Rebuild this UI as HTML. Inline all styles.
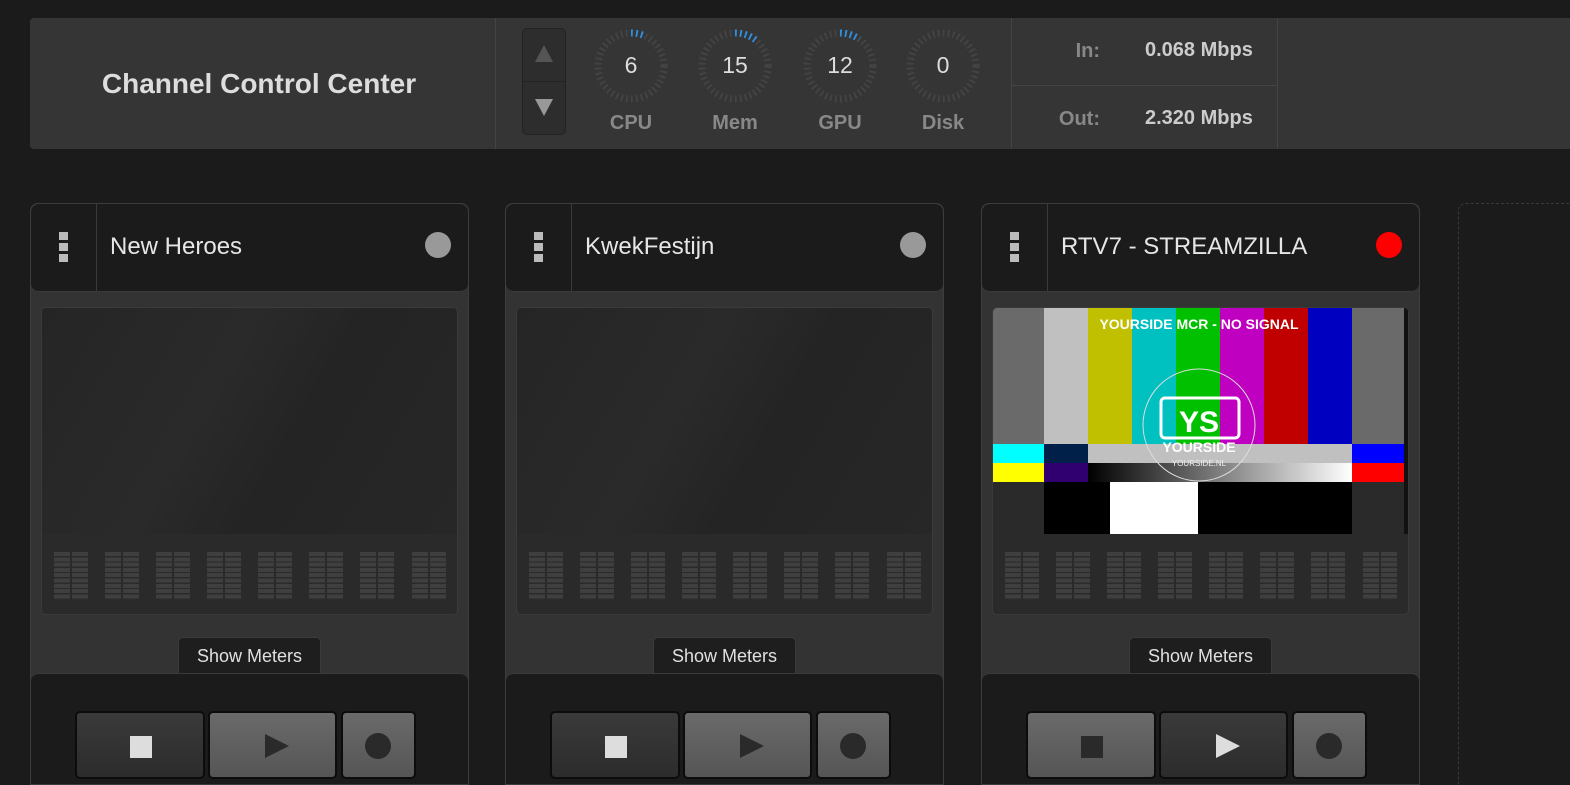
<!DOCTYPE html>
<html style="width:1570px;height:785px;overflow:hidden"><head><style>
*{box-sizing:border-box;margin:0;padding:0}
body{width:1570px;height:785px;background:#1b1b1b;font-family:"Liberation Sans",sans-serif;position:relative;overflow:hidden;color:#ddd}
.abs{position:absolute}
.top{left:30px;top:18px;width:1560px;height:131px;background:#353535;border-radius:4px}
.vl{position:absolute;top:0;height:131px;width:1px;background:#444}
.title{left:0;width:458px;top:50px;text-align:center;font-weight:bold;font-size:28px;color:#ddd}
.arr{left:492px;top:10px;width:44px;height:107px;border:1px solid #222;border-radius:5px;background:#2d2d2d}
.gl{position:absolute;width:80px;text-align:center;font-weight:bold;font-size:20px;color:#888;top:94px}
.gv{position:absolute;width:80px;text-align:center;font-size:23px;color:#ddd;top:34px}
.net{position:absolute;font-weight:bold;font-size:20px}
.card{position:absolute;top:203px;width:439px;height:582px;background:#333;border:1px solid #3d3d3d;border-radius:8px 8px 0 0;overflow:hidden}
.hdr{position:absolute;left:0;top:0;width:100%;height:88px;background:#1b1b1b;border-bottom:1px solid #3a3a3a;border-radius:8px}
.dots{position:absolute;left:28px;top:28px;width:9px}
.dots i{display:block;width:9px;height:8px;background:#bbb;margin-bottom:3px}
.hsep{position:absolute;left:65px;top:0;width:1px;height:88px;background:#3a3a3a}
.name{position:absolute;left:79px;top:29px;font-size:24px;color:#e6e6e6}
.led{position:absolute;right:17px;top:28px;width:26px;height:26px;border-radius:50%;background:#999}
.prev{position:absolute;left:10px;top:103px;width:417px;height:308px;background:#2a2a2a;border:1px solid #3a3a3a;border-radius:5px;overflow:hidden}
.vid{position:absolute;left:0;top:0;width:100%;height:226px;background:linear-gradient(120deg,#252525,#2a2a2a 40%,#242424 60%,#272727)}
.mg{position:absolute;top:244px;width:34px;height:47px;background:repeating-linear-gradient(to bottom,#3f3f3f 0 4px,transparent 4px 5.3px)}
.mg:after{content:"";position:absolute;left:16px;top:0;width:2px;height:100%;background:#2a2a2a}
.sm{position:absolute;left:147px;top:433px;width:143px;height:37px;background:#1e1e1e;border-radius:5px 5px 0 0;font-size:18px;text-align:center;line-height:36px;color:#e0e0e0;border:1px solid #3a3a3a;border-bottom:none}
.ctl{position:absolute;left:0;top:469px;width:100%;height:140px;background:#1b1b1b;border-top:1px solid #3a3a3a;border-radius:8px}
.b{position:absolute;top:37px;height:68px;border:2px solid #0c0c0c;border-radius:5px}
</style></head><body>
<div class="abs top">
 <div class="abs title">Channel Control Center</div>
 <div class="vl" style="left:465px"></div>
 <div class="abs arr"><div style="position:absolute;top:52px;left:0;width:42px;height:1px;background:#222"></div>
  <div style="position:absolute;left:12px;top:16px;width:0;height:0;border-left:9px solid transparent;border-right:9px solid transparent;border-bottom:17px solid #555"></div>
  <div style="position:absolute;left:12px;top:70px;width:0;height:0;border-left:9px solid transparent;border-right:9px solid transparent;border-top:17px solid #999"></div>
 </div>
 <svg class="abs" style="left:0;top:0" width="1000" height="131">
  <g fill="none" stroke-width="7" stroke-dasharray="1.8 3.2">
   <circle cx="601" cy="48" r="33" stroke="#444"/><circle cx="705" cy="48" r="33" stroke="#444"/>
   <circle cx="810" cy="48" r="33" stroke="#444"/><circle cx="913" cy="48" r="33" stroke="#444"/>
  </g>
  <g fill="none" stroke="#2f8fe0" stroke-width="7" stroke-dasharray="1.8 3.2">
   <path d="M601 15 A33 33 0 0 1 614 17.6"/>
   <path d="M705 15 A33 33 0 0 1 727 23"/>
   <path d="M810 15 A33 33 0 0 1 829 21"/>
  </g>
 </svg>
 <div class="gv" style="left:561px">6</div><div class="gl" style="left:561px">CPU</div>
 <div class="gv" style="left:665px">15</div><div class="gl" style="left:665px">Mem</div>
 <div class="gv" style="left:770px">12</div><div class="gl" style="left:770px">GPU</div>
 <div class="gv" style="left:873px">0</div><div class="gl" style="left:873px">Disk</div>
 <div class="vl" style="left:981px"></div>
 <div style="position:absolute;left:982px;top:67px;width:265px;height:1px;background:#444"></div>
 <div class="vl" style="left:1247px"></div>
 <div class="net" style="left:1040px;width:30px;text-align:right;top:22px;color:#888">In:</div>
 <div class="net" style="left:1115px;top:21px;color:#ccc">0.068 Mbps</div>
 <div class="net" style="left:1020px;width:50px;text-align:right;top:90px;color:#888">Out:</div>
 <div class="net" style="left:1115px;top:89px;color:#ccc">2.320 Mbps</div>
</div>

<div class="card" style="left:30px">
 <div class="hdr"><div class="dots"><i></i><i></i><i></i></div><div class="hsep"></div><div class="name">New Heroes</div><div class="led"></div></div>
 <div class="prev"><div class="vid"></div>
  <div class="mg" style="left:12px"></div><div class="mg" style="left:63px"></div><div class="mg" style="left:114px"></div><div class="mg" style="left:165px"></div><div class="mg" style="left:216px"></div><div class="mg" style="left:267px"></div><div class="mg" style="left:318px"></div><div class="mg" style="left:370px"></div></div>
 <div class="sm">Show Meters</div>
 <div class="ctl">
  <div class="b" style="left:44px;width:130px;background:linear-gradient(#3a3a3a,#2c2c2c)"><div style="position:absolute;left:53px;top:23px;width:22px;height:22px;background:#ddd"></div></div>
  <div class="b" style="left:177px;width:129px;background:linear-gradient(#6a6a6a,#555)"><div style="position:absolute;left:55px;top:21px;border-left:24px solid #2a2a2a;border-top:12px solid transparent;border-bottom:12px solid transparent"></div></div>
  <div class="b" style="left:310px;width:75px;background:linear-gradient(#6a6a6a,#555)"><div style="position:absolute;left:22px;top:20px;width:26px;height:26px;border-radius:50%;background:#2a2a2a"></div></div>
 </div>
</div>
<div class="card" style="left:505px">
 <div class="hdr"><div class="dots"><i></i><i></i><i></i></div><div class="hsep"></div><div class="name">KwekFestijn</div><div class="led"></div></div>
 <div class="prev"><div class="vid"></div>
  <div class="mg" style="left:12px"></div><div class="mg" style="left:63px"></div><div class="mg" style="left:114px"></div><div class="mg" style="left:165px"></div><div class="mg" style="left:216px"></div><div class="mg" style="left:267px"></div><div class="mg" style="left:318px"></div><div class="mg" style="left:370px"></div></div>
 <div class="sm">Show Meters</div>
 <div class="ctl">
  <div class="b" style="left:44px;width:130px;background:linear-gradient(#3a3a3a,#2c2c2c)"><div style="position:absolute;left:53px;top:23px;width:22px;height:22px;background:#ddd"></div></div>
  <div class="b" style="left:177px;width:129px;background:linear-gradient(#6a6a6a,#555)"><div style="position:absolute;left:55px;top:21px;border-left:24px solid #2a2a2a;border-top:12px solid transparent;border-bottom:12px solid transparent"></div></div>
  <div class="b" style="left:310px;width:75px;background:linear-gradient(#6a6a6a,#555)"><div style="position:absolute;left:22px;top:20px;width:26px;height:26px;border-radius:50%;background:#2a2a2a"></div></div>
 </div>
</div>
<div class="card" style="left:981px">
 <div class="hdr"><div class="dots"><i></i><i></i><i></i></div><div class="hsep"></div><div class="name">RTV7 - STREAMZILLA</div><div class="led" style="background:#f00"></div></div>
 <div class="prev"><div class="vid" style="background:#111">
  <svg width="417" height="226" style="position:absolute;left:0;top:0">
   <rect x="0" y="0" width="51" height="136" fill="#6a6a6a"/>
   <rect x="51" y="0" width="44" height="136" fill="#c0c0c0"/>
   <rect x="95" y="0" width="44" height="136" fill="#c0c000"/>
   <rect x="139" y="0" width="44" height="136" fill="#00c0c0"/>
   <rect x="183" y="0" width="44" height="136" fill="#00c000"/>
   <rect x="227" y="0" width="44" height="136" fill="#c000c0"/>
   <rect x="271" y="0" width="44" height="136" fill="#c00000"/>
   <rect x="315" y="0" width="44" height="136" fill="#0000c0"/>
   <rect x="359" y="0" width="52" height="136" fill="#6a6a6a"/>
   <rect x="0" y="136" width="51" height="19" fill="#0ff"/><rect x="0" y="155" width="51" height="19" fill="#ff0"/>
   <rect x="51" y="136" width="44" height="19" fill="#00204a"/><rect x="51" y="155" width="44" height="19" fill="#300070"/>
   <rect x="95" y="136" width="264" height="19" fill="#c0c0c0"/>
   <defs><linearGradient id="g"><stop offset="0" stop-color="#000"/><stop offset="1" stop-color="#fff"/></linearGradient></defs>
   <rect x="95" y="155" width="264" height="19" fill="url(#g)"/>
   <rect x="359" y="136" width="52" height="19" fill="#00f"/><rect x="359" y="155" width="52" height="19" fill="#f00"/>
   <rect x="0" y="174" width="51" height="52" fill="#2a2a2a"/>
   <rect x="51" y="174" width="308" height="52" fill="#000"/>
   <rect x="117" y="174" width="88" height="52" fill="#fff"/>
   <rect x="359" y="174" width="52" height="52" fill="#2a2a2a"/>
   <rect x="411" y="0" width="6" height="226" fill="#111"/>
   <circle cx="206" cy="117" r="56" fill="none" stroke="#ddd" stroke-width="1"/>
   <rect x="168" y="90" width="78" height="40" rx="4" fill="none" stroke="#fff" stroke-width="3"/>
   <text x="206" y="124" text-anchor="middle" font-family="Liberation Sans" font-weight="bold" font-size="30" fill="#fff">YS</text>
   <text x="206" y="144" text-anchor="middle" font-family="Liberation Sans" font-weight="bold" font-size="14" fill="#fff">YOURSIDE</text>
   <text x="206" y="158" text-anchor="middle" font-family="Liberation Sans" font-size="8" fill="#eee">YOURSIDE.NL</text>
   <text x="206" y="21" text-anchor="middle" font-family="Liberation Sans" font-weight="bold" font-size="14" fill="#fff">YOURSIDE MCR - NO SIGNAL</text>
  </svg></div>
  <div class="mg" style="left:12px"></div><div class="mg" style="left:63px"></div><div class="mg" style="left:114px"></div><div class="mg" style="left:165px"></div><div class="mg" style="left:216px"></div><div class="mg" style="left:267px"></div><div class="mg" style="left:318px"></div><div class="mg" style="left:370px"></div></div>
 <div class="sm">Show Meters</div>
 <div class="ctl">
  <div class="b" style="left:44px;width:130px;background:linear-gradient(#6a6a6a,#555)"><div style="position:absolute;left:53px;top:23px;width:22px;height:22px;background:#2a2a2a"></div></div>
  <div class="b" style="left:177px;width:129px;background:linear-gradient(#3a3a3a,#2c2c2c)"><div style="position:absolute;left:55px;top:21px;border-left:24px solid #ddd;border-top:12px solid transparent;border-bottom:12px solid transparent"></div></div>
  <div class="b" style="left:310px;width:75px;background:linear-gradient(#6a6a6a,#555)"><div style="position:absolute;left:22px;top:20px;width:26px;height:26px;border-radius:50%;background:#2a2a2a"></div></div>
 </div>
</div>
<div class="abs" style="left:1458px;top:203px;width:140px;height:600px;border:1px dashed #3a3a3a;border-radius:8px"></div>
</body></html>
